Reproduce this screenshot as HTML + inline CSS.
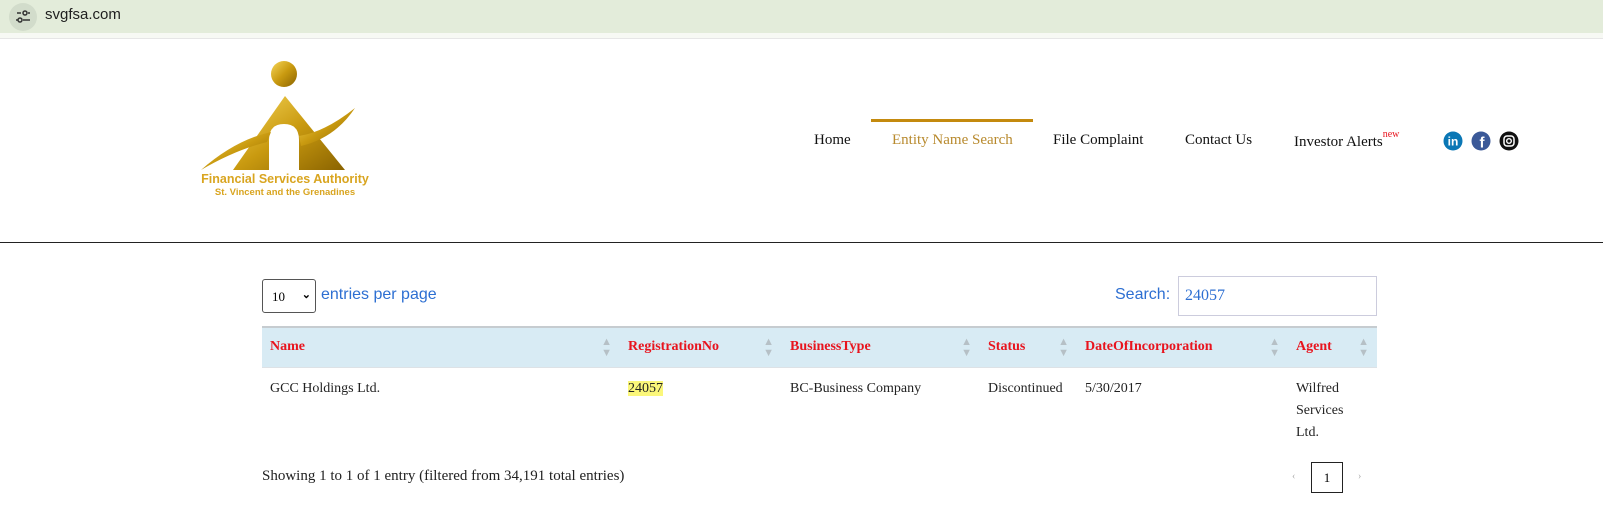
<!DOCTYPE html>
<html><head><meta charset="utf-8"><style>
*{margin:0;padding:0;box-sizing:border-box}
body{width:1603px;height:526px;background:#fff;position:relative;overflow:hidden;font-family:"Liberation Serif",serif}
.bar{position:absolute;left:0;top:0;width:1603px;height:33px;background:#e3ecda}
.bar2{position:absolute;left:0;top:33px;width:1603px;height:6px;background:#f7f9f4;border-bottom:1px solid #e6e6e6}
.ic{position:absolute;left:9px;top:3px;width:28px;height:28px;border-radius:50%;background:#d2dccb}
.url{position:absolute;left:45px;top:6px;font:15px "Liberation Sans",sans-serif;color:#1f1f1f}
.abs{position:absolute;white-space:nowrap}
.nav{top:132px;font-size:15px;color:#111}
.hr{position:absolute;left:0;top:242px;width:1603px;height:1px;background:#222}
table{position:absolute;left:262px;top:326px;width:1115px;border-collapse:collapse;font-size:14px;table-layout:fixed}
th{background:#d8ebf4;color:#e8141e;text-align:left;height:40px;padding:0 8px;border-top:2px solid #c6ccd0;border-bottom:1px solid #dde2e6;position:relative;font-weight:bold}
th .s{position:absolute;right:8px;top:9px;color:#b6c0c6;font-size:11px;line-height:11px}
td{vertical-align:top;padding:10px 8px;color:#222;line-height:22px}
</style></head><body>
<div class="bar"></div><div class="bar2"></div>
<div class="ic"><svg width="28" height="28"><g stroke="#333" stroke-width="1.5" fill="none"><line x1="8" y1="10" x2="12" y2="10"/><circle cx="16" cy="10" r="2"/><line x1="19" y1="10" x2="21" y2="10"/><circle cx="11" cy="17" r="2"/><line x1="14" y1="17" x2="21" y2="17"/><line x1="7" y1="17" x2="9" y2="17"/></g></svg></div>
<div class="url">svgfsa.com</div>

<svg class="abs" style="left:195px;top:58px" width="185" height="145">
<defs><linearGradient id="g" x1="0" y1="0" x2="1" y2="1"><stop offset="0" stop-color="#f7d75a"/><stop offset=".5" stop-color="#c99a10"/><stop offset="1" stop-color="#8a6300"/></linearGradient></defs>
<circle cx="89" cy="16" r="13" fill="url(#g)"/>
<path d="M90 38 L38 112 L150 112 Z" fill="url(#g)"/>
<path d="M74 112 L74 82 Q74 66 89 66 Q104 66 104 82 L104 112 Z" fill="#fff"/>
<path d="M6 112 Q40 82 76 74 L72 84 Q40 92 6 112Z" fill="url(#g)"/>
<path d="M104 78 Q130 74 160 50 Q140 80 106 88Z" fill="url(#g)"/>
<text x="90" y="125" text-anchor="middle" font-family="Liberation Sans,sans-serif" font-size="12.5" font-weight="bold" fill="#d9a520">Financial Services Authority</text>
<text x="90" y="137" text-anchor="middle" font-family="Liberation Sans,sans-serif" font-size="9.5" font-weight="bold" fill="#d9a520">St. Vincent and the Grenadines</text>
</svg>

<div class="abs" style="left:871px;top:119px;width:162px;height:3px;background:#c48a0e"></div>
<div class="abs nav" style="left:814px">Home</div>
<div class="abs nav" style="left:892px;color:#b88a2e">Entity Name Search</div>
<div class="abs nav" style="left:1053px">File Complaint</div>
<div class="abs nav" style="left:1185px">Contact Us</div>
<div class="abs nav" style="left:1294px">Investor Alerts<sup style="color:#e8141e;font-size:10px;position:relative;top:-3px">new</sup></div>
<svg class="abs" style="left:1443px;top:131px" width="78" height="20">
<circle cx="10" cy="10" r="9.5" fill="#0a77b5"/><text x="10" y="14.5" text-anchor="middle" font-family="Liberation Sans,sans-serif" font-weight="bold" font-size="12" fill="#fff">in</text>
<circle cx="38" cy="10" r="9.5" fill="#3b5998"/><text x="39" y="16.5" text-anchor="middle" font-family="Liberation Sans,sans-serif" font-weight="bold" font-size="15" fill="#fff">f</text>
<circle cx="66" cy="10" r="9.5" fill="#111"/><rect x="61" y="5" width="10" height="10" rx="3" fill="none" stroke="#fff" stroke-width="1.5"/><circle cx="66" cy="10" r="2.3" fill="none" stroke="#fff" stroke-width="1.4"/>
</svg>
<div class="hr"></div>

<div class="abs" style="left:262px;top:279px;width:54px;height:34px;border:1px solid #555;border-radius:3px;font-size:13px;padding:9px 0 0 9px">10<span style="position:absolute;right:4px;top:8px;font:bold 11px 'Liberation Sans',sans-serif">&#8964;</span></div>
<div class="abs" style="left:321px;top:286px;font:16px 'Liberation Sans',sans-serif;color:#2d6fd2">entries per page</div>
<div class="abs" style="left:1115px;top:286px;font:16px 'Liberation Sans',sans-serif;color:#2d6fd2">Search:</div>
<div class="abs" style="left:1178px;top:276px;width:199px;height:40px;border:1px solid #ccd;font-size:16px;color:#2d6fd2;padding:10px 0 0 6px">24057</div>

<table>
<colgroup><col style="width:358px"><col style="width:162px"><col style="width:198px"><col style="width:97px"><col style="width:211px"><col style="width:89px"></colgroup>
<tr><th>Name<span class="s">▲<br>▼</span></th><th>RegistrationNo<span class="s">▲<br>▼</span></th><th>BusinessType<span class="s">▲<br>▼</span></th><th>Status<span class="s">▲<br>▼</span></th><th>DateOfIncorporation<span class="s">▲<br>▼</span></th><th>Agent<span class="s">▲<br>▼</span></th></tr>
<tr><td>GCC Holdings Ltd.</td><td><span style="background:#fbf77a">24057</span></td><td>BC-Business Company</td><td>Discontinued</td><td>5/30/2017</td><td>Wilfred<br>Services<br>Ltd.</td></tr>
</table>

<div class="abs" style="left:262px;top:468px;font-size:15px;color:#222">Showing 1 to 1 of 1 entry (filtered from 34,191 total entries)</div>
<div class="abs" style="left:1292px;top:471px;font-size:10px;color:#aaa">‹</div>
<div class="abs" style="left:1311px;top:462px;width:32px;height:31px;border:1px solid #222;font-size:13px;text-align:center;line-height:29px">1</div>
<div class="abs" style="left:1358px;top:471px;font-size:10px;color:#aaa">›</div>
</body></html>
